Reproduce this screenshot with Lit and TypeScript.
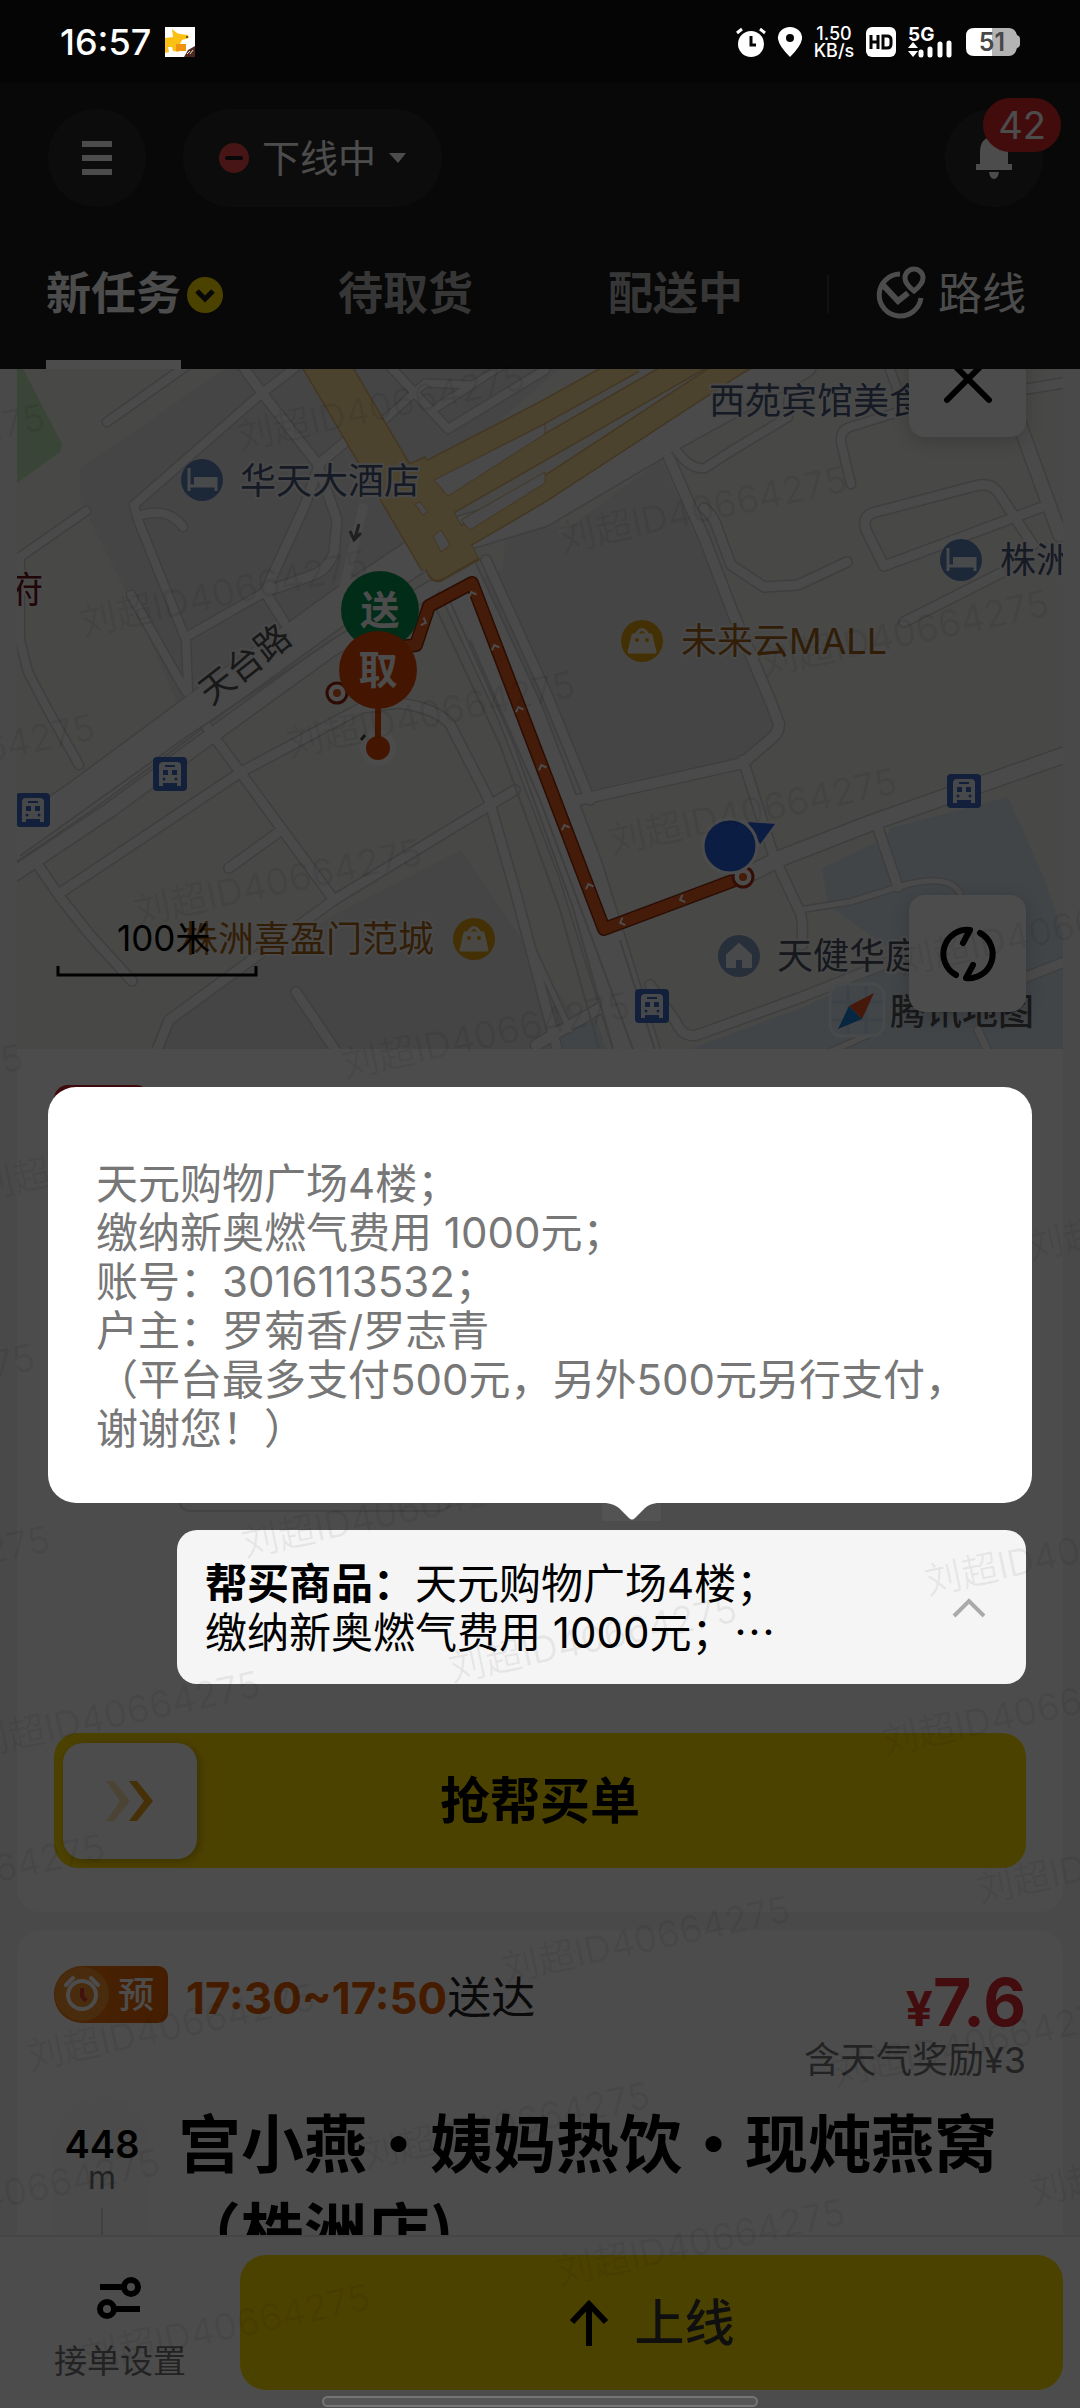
import { LitElement, html, svg, css } from "lit";
import { customElement } from "lit/decorators.js";

const FONT = css`Inter, "Noto Sans CJK SC", sans-serif`;

/* ---------- map data, in canvas units ---------- */

interface Road { d: string; w: number; }

const roads: Road[] = [
  { d: "M107 422L189 364", w: 8 },
  { d: "M300 364L262 393L134 505L138 520L186 640L188 690", w: 8 },
  { d: "M241 364L262 393L317 463L337 520L334 553Q328 568 316 574L265 592", w: 9 },
  { d: "M350 438L320 463L305 505L265 592L284 622", w: 9 },
  { d: "M265 592L186 637", w: 8 },
  { d: "M138 516Q168 506 183 527", w: 8 },
  { d: "M131 595L186 692", w: 8 },
  { d: "M86 511L20 557L20 640L28 672L48 710L79 765", w: 8 },
  { d: "M380 424L425 383L472 385L440 405", w: 7 },
  { d: "M388 364L448 429L545 370", w: 8 },
  { d: "M432 411L502 366", w: 6 },
  { d: "M669 458L705 540L733 613L770 700L779 724Q779 732 772 738L743 763L578 800", w: 10 },
  { d: "M676 450Q690 470 705 468L733 450L788 417L790 364", w: 8 },
  { d: "M851 484L841 442Q840 430 850 427L905 410", w: 8 },
  { d: "M704 508Q714 516 718 530L731 565L764 587L798 585L847 562", w: 9 },
  { d: "M1045 506L884 566L866 530Q862 518 872 513L975 486Q990 482 998 492L1033 545", w: 9 },
  { d: "M1018 420L1060 535", w: 13 },
  { d: "M888 364L900 396", w: 8 },
  { d: "M1020 390L1070 382", w: 9 },
  { d: "M904 622L1001 573", w: 9 },
  { d: "M60 893L241 772L361 708L398 703Q436 708 450 724L489 800L515 890L560 1060", w: 9 },
  { d: "M207 727L334 900", w: 9 },
  { d: "M279 832L229 868", w: 9 },
  { d: "M515 790L334 900L169 1020L153 1060", w: 9 },
  { d: "M38 865L60 897L90 935L132 981", w: 9 },
  { d: "M296 992L342 1060", w: 9 },
  { d: "M743 760L774 857L798 908Q804 916 802 945", w: 9 },
  { d: "M743 877L781 858L871 823L1070 753", w: 15 },
  { d: "M877 825L898 887", w: 9 },
  { d: "M805 909L850 902L898 887Q948 872 960 893", w: 5 },
  { d: "M650 985L676 1022Q684 1040 700 1034L802 997L920 950", w: 9 },
  { d: "M1010 983L1070 960", w: 9 },
  { d: "M820 1056L880 1030", w: 5 },
  { d: "M536 1045L600 1008", w: 10 },
  { d: "M978 1030L990 1056", w: 7 },
  { d: "M530 944L570 1030", w: 5 },
  { d: "M5 848L80 797L230 686L341 606L440 540L540 510L664 437L800 362", w: 34 },
  { d: "M5 880L110 810L200 744L330 650L432 588", w: 14 },
  { d: "M452 566L520 712L580 868L640 1060", w: 44 },
  { d: "M486 560L545 690L590 800", w: 9 },
];

const medians = [
  "M20 856L185 738L332 640",
  "M432 600L500 745L560 910L600 1052",
  "M445 590L512 740L572 905L614 1052",
  "M470 640L540 800L600 960L634 1052",
  "M620 940L655 1050",
];

const yellowRoads: Road[] = [
  { d: "M322 358L441 560", w: 42 },
  { d: "M424 474L540 414L634 362", w: 20 },
  { d: "M430 513L540 450L700 358", w: 22 },
  { d: "M448 546L540 492L745 358", w: 21 },
];

const routeLine = "M400 647L416 645L429 606L472 583L604 929L743 877";

const hotels: [number, number][] = [[202, 480], [961, 560]];
const malls: [number, number][] = [[642, 641], [474, 939]];
const buses: [number, number][] = [[170, 774], [33, 810], [964, 791], [652, 1006]];
const routeTicks: [number, number, number][] = [
  [424, 622, 110], [472, 594, -20], [495, 647, -20], [519, 709, -20], [542, 767, -20],
  [565, 827, -20], [589, 886, -20], [622, 922, -110], [682, 899, -110],
];

const labels: { x: number; y: number; t: string; c: string }[] = [
  { x: 240, y: 494, t: "华天大酒店", c: "hotel-label" },
  { x: 709, y: 414, t: "西苑宾馆美食", c: "hotel-label" },
  { x: 1000, y: 573, t: "株洲", c: "hotel-label" },
  { x: 681, y: 654, t: "未来云MALL", c: "mall-label" },
  { x: 182, y: 952, t: "株洲喜盈门范城", c: "mall-label" },
  { x: 777, y: 969, t: "天健华庭", c: "home-label" },
  { x: 7, y: 603, t: "府", c: "gov-label" },
];

const MARK = "刘超ID40664275";
const marks: [number, number][] = [
  [-240, 490], [240, 450], [562, 552], [83, 636], [764, 676], [290, 757], [612, 854],
  [-190, 800], [137, 925], [900, 975], [345, 1078], [-20, 1200], [-262, 1130], [1030, 1260],
  [-250, 1430], [245, 1557], [928, 1595], [-235, 1612], [452, 1682], [-25, 1757], [885, 1755],
  [-180, 1920], [980, 1903], [505, 1982], [30, 2070], [835, 2086], [365, 2168], [-125, 2235],
  [1033, 2205], [560, 2285], [85, 2370],
];

/* ---------- map ---------- */

@customElement("route-map")
export class RouteMap extends LitElement {
  static styles = css`
    :host { display: block; position: relative; overflow: hidden; font-family: ${FONT}; }
    .canvas { display: block; width: 100%; height: auto; }
    .casing { fill: none; stroke: #cfd0d2; stroke-linecap: round; stroke-linejoin: round; }
    .road { fill: none; stroke: #f7f7f7; stroke-linecap: round; stroke-linejoin: round; }
    .median { fill: none; stroke: #d2d3d5; stroke-width: 2; }
    .y-casing { fill: none; stroke: #e0b777; stroke-linecap: butt; stroke-linejoin: round; }
    .y-road { fill: none; stroke: #fbdf9c; stroke-linecap: butt; stroke-linejoin: round; }
    .label { font-size: 36px; paint-order: stroke; stroke: #f5f5f5; stroke-width: 4px; stroke-linejoin: round; }
    .hotel-label { fill: #4a5878; }
    .home-label { fill: #4c5262; }
    .mall-label { fill: #a8661a; }
    .gov-label { fill: #6d1418; }
    .street { font-size: 35px; fill: #505050; paint-order: stroke; stroke: #f5f5f5; stroke-width: 4px; }
    .brand { font-size: 36px; font-weight: 500; fill: #555; }
    .scale { font-size: 35px; fill: #000; }
    .pin { font-size: 39px; font-weight: 700; fill: #fff; text-anchor: middle; }
    .tool {
      position: absolute; right: 37px; width: 117px; height: 117px; padding: 0; border: 0;
      border-radius: 16px; background: #fff; box-shadow: 0 4px 18px rgba(0, 0, 0, .18);
      display: flex; align-items: center; justify-content: center;
    }
    .close { top: -49px; }
    .refresh { bottom: 37px; }
  `;

  render() {
    return html`
      <svg class="canvas" viewBox="17 369 1046 680" role="img" aria-label="地图">
        <rect x="17" y="369" width="1046" height="680" fill="#f1f0ea"></rect>
        <path fill="#e8e8e9" d="M80 468L225 369H320L440 560L190 735L150 640L80 500Z"></path>
        <path fill="#e8e8e9" d="M350 369H560L430 480L380 440Z"></path>
        <path fill="#e6e6e7" d="M480 580L545 545L661 460L774 710L775 728L740 757L590 790L520 680Z"></path>
        <path fill="#e6e6e8" d="M461 850L540 967L600 1049H155L172 1020L334 915Z"></path>
        <path fill="#e8e8e9" d="M505 540L560 520L530 690L500 620Z"></path>
        <path fill="#bfe6b4" d="M17 369H23L62 444L60 452L17 483Z"></path>
        <path fill="#dce6f0" d="M822 868L885 838L891 828L1008 797L1045 880L1063 935V1049H690L806 1006L905 960L828 905Z"></path>
        <path fill="#dce6f0" d="M540 1049L595 1015L606 1049Z"></path>
        ${roads.map(r => svg`<path class="casing" d=${r.d} stroke-width=${r.w + 3}></path>`)}
        ${roads.map(r => svg`<path class="road" d=${r.d} stroke-width=${r.w}></path>`)}
        <path d="M364 504L343 590" fill="none" stroke="#f7f7f7" stroke-width="9"></path>
        ${medians.map(d => svg`<path class="median" d=${d}></path>`)}
        ${yellowRoads.map(r => svg`<path class="y-casing" d=${r.d} stroke-width=${r.w + 3}></path>`)}
        <path fill="#e0b777" d="M395 470L425 456L480 560L441 582Q432 584 427 574Z"></path>
        ${yellowRoads.map(r => svg`<path class="y-road" d=${r.d} stroke-width=${r.w}></path>`)}
        <path fill="#fbdf9c" d="M395 470L425 458L478 558L441 579Q433 582 428 572Z"></path>
        <path fill="#f5f5f5" stroke="#e0b777" stroke-width="1" d="M433 536L441 530L450 545L441 552ZM415 504L420 502L428 512L423 515ZM461 520L545 472V483L470 530ZM434 480L545 424V434L448 496Z"></path>
        <path d="M359 524L355 538M350 531L354 540L361 533" fill="none" stroke="#6a6a6a" stroke-width="3"></path>

        ${hotels.map(([x, y]) => svg`<g transform="translate(${x} ${y})">
          <circle r="21" fill="#5f85ba"></circle>
          <path d="M-13 -12V11M-13 6H14M14 11V-3" stroke="#f2f5fa" stroke-width="3" fill="none"></path>
          <rect x="-8" y="-3" width="22" height="8" fill="#f2f5fa"></rect></g>`)}
        ${malls.map(([x, y]) => svg`<g transform="translate(${x} ${y})">
          <circle r="21" fill="#e5a012"></circle>
          <path d="M-9 -6H9L13 11H-13Z" fill="#f6efe0" stroke="#f6efe0" stroke-width="3" stroke-linejoin="round"></path>
          <path d="M-6 -6Q0 -17 6 -6" fill="none" stroke="#f6efe0" stroke-width="3"></path>
          <circle cx="-5" cy="-1" r="2" fill="#e5a012"></circle><circle cx="5" cy="-1" r="2" fill="#e5a012"></circle></g>`)}
        <g transform="translate(739 956)">
          <circle r="21" fill="#7f9fc2"></circle>
          <path d="M0 -12L12 -1V11H4V3H-4V11H-12V-1Z" fill="#f2f5fa" stroke="#f2f5fa" stroke-width="2" stroke-linejoin="round"></path>
        </g>
        ${buses.map(([x, y]) => svg`<g transform="translate(${x} ${y})">
          <rect x="-17" y="-17" width="34" height="34" rx="4" fill="#3f6cc8"></rect>
          <path d="M-11 -8Q-11 -12 -7 -12H7Q11 -12 11 -8V12H7V9H-7V12H-11Z" fill="#eef1f8"></path>
          <path d="M-5 -8H5" stroke="#3f6cc8" stroke-width="2"></path>
          <path d="M-7 -4H-2V1H-7ZM2 -4H7V1H2Z" fill="#3f6cc8"></path>
          <circle cx="-6" cy="5" r="1.5" fill="#3f6cc8"></circle><circle cx="6" cy="5" r="1.5" fill="#3f6cc8"></circle></g>`)}

        ${labels.map(l => svg`<text class="label ${l.c}" x=${l.x} y=${l.y}>${l.t}</text>`)}
        <text class="street" transform="translate(211 706) rotate(-38)">天台路</text>

        <path d=${routeLine} fill="none" stroke="#8c2c0c" stroke-width="14" stroke-linejoin="round"></path>
        <path d=${routeLine} fill="none" stroke="#e85a1e" stroke-width="11" stroke-linejoin="round"></path>
        ${routeTicks.map(([x, y, a]) => svg`<path transform="translate(${x} ${y}) rotate(${a})" d="M-4 2L0 -2L4 2" fill="none" stroke="#fff" stroke-width="2"></path>`)}
        <circle cx="337" cy="693" r="10" fill="#fff" stroke="#9c2410" stroke-width="3"></circle>
        <circle cx="337" cy="693" r="4" fill="#e85a1e"></circle>
        <circle cx="743" cy="877" r="10" fill="#fff" stroke="#b02c14" stroke-width="3"></circle>
        <circle cx="743" cy="877" r="4" fill="#e85a1e"></circle>
        <circle cx="380" cy="610" r="39" fill="#06934f"></circle>
        <text class="pin" x="380" y="624">送</text>
        <circle cx="378" cy="748" r="18" fill="#fbfbfb"></circle>
        <path d="M361 740L365 735" stroke="#444" stroke-width="3"></path>
        <path d="M378 700V748" stroke="#e54c04" stroke-width="6"></path>
        <circle cx="378" cy="748" r="12" fill="#e54c04"></circle>
        <circle cx="378" cy="670" r="39" fill="#e54c04"></circle>
        <text class="pin" x="378" y="684">取</text>
        <path d="M746 821L777 823L760 846Z" fill="#2b62e0" stroke="#f5f5f5" stroke-width="2"></path>
        <circle cx="730" cy="846" r="27" fill="#2b62e0" stroke="#fff" stroke-width="3"></circle>

        <text class="scale" x="117" y="951">100米</text>
        <path d="M58 966V975H256V966" fill="none" stroke="#000" stroke-width="3"></path>

        <rect x="830" y="984" width="54" height="52" rx="12" fill="#dfeaf5" stroke="#eef4fa" stroke-width="3"></rect>
        <path d="M848 986V1034M866 986V1034M832 1002H882M832 1020H882" stroke="#c9dcf0" stroke-width="3"></path>
        <path d="M874 993L862 1019L849 1006Z" fill="#e8501e"></path>
        <path d="M838 1029L849 1006L862 1019Z" fill="#1d7fd8"></path>
        <text class="brand" x="890" y="1025">腾讯地图</text>
      </svg>
      <button class="tool close" aria-label="关闭地图">
        <svg width="52" height="52" viewBox="-26 -26 52 52"><path d="M-21 -21L21 21M21 -21L-21 21" stroke="#000" stroke-width="6" stroke-linecap="round"></path></svg>
      </button>
      <button class="tool refresh" aria-label="刷新">
        <svg width="60" height="60" viewBox="-30 -30 60 60" fill="none" stroke="#000" stroke-width="6" stroke-linecap="round" stroke-linejoin="round">
          <path d="M-12 21A24 24 0 0 1 2 -24L-5 -11"></path>
          <path d="M12 -21A24 24 0 0 1 -2 24L5 11"></path>
        </svg>
      </button>
    `;
  }
}

/* ---------- application ---------- */

@customElement("app-root")
export class AppRoot extends LitElement {
  static styles = css`
    :host { display: block; font-family: ${FONT}; text-spacing-trim: space-all; }
    * { box-sizing: border-box; }
    button { font: inherit; color: inherit; border: 0; padding: 0; margin: 0; background: none; }
    svg { display: block; flex: none; overflow: visible; }
    .app { position: relative; display: flex; flex-direction: column; height: 100vh; overflow: hidden; background: #f5f5f5; }
    .scrim { position: absolute; inset: 0; z-index: 1; background: rgba(0, 0, 0, .7); }
    .marks { position: absolute; inset: 0; z-index: 3; width: 100%; height: 100%; pointer-events: none; }
    .marks text { font-size: 37px; fill: rgba(0, 0, 0, .06); }

    .status { flex: none; height: 83px; background: #111; }
    .status-row { position: relative; z-index: 2; display: flex; align-items: center; height: 84px; padding: 0 60px; color: #fff; }
    .clock { font-size: 36px; line-height: 40px; font-weight: 500; }
    .app-icon { margin-left: 14px; }
    .sys { display: flex; align-items: center; margin-left: auto; gap: 12px; }
    .speed { display: flex; flex-direction: column; align-items: center; width: 40px; font-size: 18px; line-height: 17px; font-weight: 500; }

    .header { flex: none; background: #1b1b1b; color: #fff; }
    .bar { display: flex; align-items: center; gap: 37px; padding: 26px 37px 0 48px; }
    .round { display: flex; align-items: center; justify-content: center; width: 98px; height: 98px; border-radius: 50%; background: #2b2b2b; }
    .state { display: flex; align-items: center; gap: 13px; height: 98px; padding: 0 36px; border-radius: 49px; background: #2b2b2b; font-size: 38px; line-height: 48px; }
    .bell { position: relative; margin-left: auto; }
    .badge { position: absolute; top: -11px; right: -18px; width: 78px; height: 54px; border-radius: 27px; background: #e02b2b; font-size: 38px; line-height: 54px; text-align: center; }
    .tabs { display: grid; grid-template-columns: 292fr 270fr 219fr auto; padding: 55px 54px 0 46px; }
    .tab { display: flex; align-items: flex-start; gap: 6px; height: 107px; font-size: 45px; line-height: 64px; font-weight: 700; color: #b5b5b5; }
    .tab-name { display: flex; flex-direction: column; justify-content: space-between; height: 107px; }
    .tab-name.active { color: #fff; border-bottom: 9px solid #fff; }
    .tab-arrow { margin-top: 15px; }
    .route { display: flex; align-items: center; gap: 12px; height: 64px; font-size: 44px; line-height: 64px; }
    .divider { width: 2px; height: 38px; margin-right: 35px; background: #3a3a3a; }

    .list { flex: 1; min-height: 0; overflow: hidden; display: flex; flex-direction: column; gap: 18px; padding: 0 17px; }
    .card { flex: none; background: #fff; border-radius: 24px; }
    .card.first { border-radius: 0 0 24px 24px; padding-bottom: 44px; }
    .summary { display: flex; flex-direction: column; justify-content: space-between; height: 463px; padding: 36px 0 0 37px; }
    .tag { width: 96px; height: 56px; border-radius: 14px; background: #d3242b; }
    .chip { width: 274px; height: 60px; margin-left: 124px; border: 2px solid #e2e2e2; border-radius: 12px; }
    .goods-wrap { position: relative; margin: 18px 37px 49px 160px; }
    .goods { position: relative; z-index: 2; display: flex; width: 100%; align-items: center; justify-content: space-between; padding: 29px 40px 27px 28px; border-radius: 20px; background: #f5f5f5; color: #000; text-align: left; font-size: 42px; line-height: 49px; }
    .goods-text { white-space: pre-line; }
    .popup-box { position: absolute; z-index: 4; left: -129px; right: -6px; bottom: calc(100% + 27px); }
    .popup { margin: 0; padding: 72px 48px 50px 48px; border-radius: 28px; background: #fff; color: #777; font-size: 42px; line-height: 49px; white-space: pre-line; }
    .tail-bg { position: absolute; top: 100%; left: 554px; width: 59px; height: 18px; background: #535353; }

    .grab { display: flex; align-items: center; position: relative; width: calc(100% - 74px); height: 135px; margin: 0 37px; border-radius: 24px; background: #ffdc00; color: #000; font-size: 50px; line-height: 60px; font-weight: 700; }
    .grab-text { flex: 1; margin-right: 143px; text-align: center; }
    .handle { display: flex; align-items: center; justify-content: center; width: 134px; height: 116px; margin-left: 9px; border-radius: 20px; background: #fff; box-shadow: 3px 2px 8px rgba(120, 90, 0, .4); }

    .order-head { display: flex; align-items: flex-start; padding: 36px 37px 0; }
    .book { display: flex; align-items: center; justify-content: space-between; width: 114px; height: 57px; padding-right: 14px; border-radius: 28px 10px 10px 28px; background: linear-gradient(90deg, #f27a10, #e66000); color: #fff; font-size: 36px; line-height: 56px; font-weight: 500; }
    .when { display: flex; align-items: baseline; margin-left: 18px; line-height: 64px; font-size: 44px; color: #222; }
    .time { font-size: 44px; font-weight: 700; color: #e66000; }
    .pay { margin-left: auto; text-align: right; color: #e02b33; }
    .price { display: flex; align-items: baseline; justify-content: flex-end; font-size: 66px; font-weight: 700; line-height: 72px; }
    .yen { font-size: 48px; line-height: 48px; }
    .bonus { font-size: 36px; line-height: 44px; color: #777; }
    .order-body { display: flex; gap: 28px; padding: 14px 37px 0; }
    .dist { display: flex; flex-direction: column; align-items: center; width: 96px; height: 400px; padding-top: 26px; border-radius: 48px; background: #fafafa; font-size: 38px; line-height: 44px; font-weight: 600; color: #000; }
    .unit { font-size: 32px; line-height: 24px; font-weight: 400; color: #777; }
    .stem { width: 2px; flex: 1; margin-top: 18px; background: #d8d8d8; }
    .shop { margin: 0; font-family: "Noto Sans CJK SC", sans-serif; font-size: 63px; line-height: 88px; font-weight: 700; color: #000; white-space: pre-line; }

    .bottom { flex: none; display: flex; gap: 54px; height: 173px; padding: 18px 17px 18px 54px; border-top: 2px solid #e6e6e6; background: #fff; position: relative; }
    .settings { display: flex; flex-direction: column; align-items: center; gap: 18px; padding-top: 22px; font-size: 33px; line-height: 48px; color: #777; white-space: nowrap; }
    .online { flex: 1; display: flex; align-items: center; justify-content: center; gap: 26px; height: 135px; border-radius: 26px; background: #ffdc00; color: #333; font-size: 50px; line-height: 60px; font-weight: 500; }
    .home-bar { position: absolute; bottom: 1px; left: 50%; width: 436px; height: 11px; margin-left: -218px; z-index: 2; border: 2px solid #757575; border-radius: 6px; background: #555; }
  `;

  render() {
    return html`
      <div class="app" lang="zh-CN">
        ${this.statusBar()} ${this.header()}
        <main class="list">
          <section class="card first">
            <route-map></route-map>
            <div class="summary">
              <div class="tag"></div>
              <div class="chip"></div>
            </div>
            <div class="goods-wrap">
              <button class="goods" aria-expanded="true">
                <span class="goods-text"><b>帮买商品：</b>天元购物广场4楼；\n缴纳新奥燃气费用 1000元；⋯</span>
                <svg width="34" height="20" viewBox="0 0 34 20"><path d="M2 18L17 3L32 18" fill="none" stroke="#aaa" stroke-width="4"></path></svg>
              </button>
              <div class="popup-box" role="tooltip">
                <p class="popup">天元购物广场4楼；\n缴纳新奥燃气费用 1000元；\n账号：3016113532；\n户主：罗菊香/罗志青\n（平台最多支付500元，另外500元另行支付，\n谢谢您！）</p>
                <div class="tail-bg">
                  <svg width="59" height="18" viewBox="0 0 59 18"><path d="M4 0H55Q47 1 43 5L33 15Q30 18 27 15L17 5Q12 1 4 0Z" fill="#fff"></path></svg>
                </div>
              </div>
            </div>
            <button class="grab">
              <span class="handle">
                <svg width="48" height="40" viewBox="0 0 48 40"><path d="M0 0H8L24 20L8 40H0L14 20Z" fill="#fae3b0"></path><path d="M23 0H31L47 20L31 40H23L38 20Z" fill="#e9a21c"></path></svg>
              </span>
              <span class="grab-text">抢帮买单</span>
            </button>
          </section>
          ${this.nextOrder()}
        </main>
        ${this.bottomBar()}
        <div class="scrim"></div>
        <svg class="marks" viewBox="0 0 1080 2408" preserveAspectRatio="xMinYMin slice" aria-hidden="true">
          ${marks.map(([x, y]) => svg`<text transform="translate(${x} ${y}) rotate(-12)">${MARK}</text>`)}
        </svg>
      </div>
    `;
  }

  private statusBar() {
    return html`
      <div class="status">
        <div class="status-row">
          <span class="clock">16:57</span>
          <svg class="app-icon" width="30" height="30" viewBox="0 0 30 30">
            <rect width="30" height="30" fill="#fff"></rect>
            <path d="M0 11L8 10L7 2L12 6L15 7L23 8L24 11L17 13L14 19L12 21L14 25L8 24L7 20L3 20L4 25L0 26Z" fill="#fbc014"></path>
            <rect x="11" y="17" width="10" height="7" fill="#f0930f"></rect>
            <circle cx="22" cy="10" r="1" fill="#333"></circle>
            <path d="M19 30L23 23L30 19V30Z" fill="#4a2a20"></path>
            <path d="M22 27L25 24M25 27L28 23" stroke="#e8d8d0" stroke-width="1"></path>
          </svg>
          <span class="sys">
            <svg width="30" height="30" viewBox="0 0 30 30"><circle cx="15" cy="17" r="13" fill="#fff"></circle><path d="M1 6L6 2M29 6L24 2" stroke="#fff" stroke-width="3"></path><path d="M15 9V18H20" fill="none" stroke="#050505" stroke-width="3"></path></svg>
            <svg width="24" height="30" viewBox="0 0 24 30"><path d="M12 0A12 11 0 0 1 24 12Q23 19 12 30Q1 19 0 12A12 11 0 0 1 12 0Z" fill="#fff"></path><circle cx="12" cy="11" r="4" fill="#050505"></circle></svg>
            <span class="speed"><span>1.50</span><span>KB/s</span></span>
            <svg width="30" height="30" viewBox="0 0 30 30"><rect width="30" height="30" rx="6" fill="#fff"></rect><path d="M5 8V22M12 8V22M5 15H12M17 9H21Q25 9 25 13V17Q25 21 21 21H17Z" fill="none" stroke="#050505" stroke-width="3"></path></svg>
            <svg width="46" height="32" viewBox="0 0 46 32"><text x="0" y="15" font-size="19" font-weight="700" fill="#fff">5G</text><path d="M0 22L5 16L10 22ZM0 25H10L5 31Z" fill="#fff"></path><path d="M13 26V29M22 23V29M32 18V29M41 17V29" stroke="#fff" stroke-width="5" stroke-linecap="round"></path></svg>
            <svg width="54" height="28" viewBox="0 0 54 28"><path d="M8 0H26V28H8Q0 28 0 20V8Q0 0 8 0Z" fill="#fff"></path><path d="M26 0H43Q49 0 51 7Q54 8 54 11V16Q54 19 51 20Q49 28 43 28H26Z" fill="#b4b4b4"></path><text x="26" y="23" text-anchor="middle" font-size="25" font-weight="600" fill="#484848">51</text></svg>
          </span>
        </div>
      </div>`;
  }

  private header() {
    return html`
      <header class="header">
        <div class="bar">
          <button class="round" aria-label="菜单">
            <svg width="30" height="34" viewBox="0 0 30 34"><path d="M0 3H30M0 17H30M0 31H30" stroke="#fff" stroke-width="6"></path></svg>
          </button>
          <button class="state">
            <svg width="30" height="30" viewBox="0 0 30 30"><circle cx="15" cy="15" r="15" fill="#ee4646"></circle><path d="M8 15H22" stroke="#1b1b1b" stroke-width="4" stroke-linecap="round"></path></svg>
            <span>下线中</span>
            <svg width="17" height="10" viewBox="0 0 17 10"><path d="M0 0H17L9 10Z" fill="#fff"></path></svg>
          </button>
          <button class="round bell" aria-label="消息">
            <svg width="36" height="42" viewBox="0 0 36 42"><path d="M4 27V15Q4 0 18 0Q32 0 32 15V27H36V33H0V27ZM13 35H23Q22 42 18 42Q14 42 13 35Z" fill="#fff"></path></svg>
            <span class="badge">42</span>
          </button>
        </div>
        <nav class="tabs">
          <button class="tab"><span class="tab-name active">新任务</span>
            <svg class="tab-arrow" width="36" height="36" viewBox="0 0 36 36"><circle cx="18" cy="18" r="18" fill="#ffdc00"></circle><path d="M10 14L18 22L26 14" fill="none" stroke="#1b1b1b" stroke-width="5"></path></svg>
          </button>
          <button class="tab"><span class="tab-name">待取货</span></button>
          <button class="tab"><span class="tab-name">配送中</span></button>
          <button class="route">
            <span class="divider"></span>
            <svg width="50" height="54" viewBox="0 0 50 54" fill="none" stroke="#fff" stroke-width="5">
              <path d="M24 7A21 21 0 1 0 45 31"></path>
              <path d="M38 24Q29 17 29 11A9 9 0 0 1 47 11Q47 17 38 24Z"></path>
              <path d="M7 18L22 34L32 26" stroke-width="6"></path>
            </svg>
            <span>路线</span>
          </button>
        </nav>
      </header>`;
  }

  private nextOrder() {
    return html`
      <section class="card">
        <div class="order-head">
          <span class="book">
            <svg width="57" height="57" viewBox="0 0 57 57"><circle cx="28" cy="28" r="27" fill="#f3902f"></circle><circle cx="28" cy="29" r="14" fill="none" stroke="#fff" stroke-width="4"></circle><path d="M12 19L19 12M37 12L44 19" stroke="#fff" stroke-width="4" stroke-linecap="round"></path><path d="M28 22V30L32 35" fill="none" stroke="#e03a30" stroke-width="4"></path></svg>
            预</span>
          <span class="when"><span class="time">17:30~17:50</span>送达</span>
          <div class="pay">
            <div class="price"><span class="yen">¥</span>7.6</div>
            <div class="bonus">含天气奖励¥3</div>
          </div>
        </div>
        <div class="order-body">
          <div class="dist">448<span class="unit">m</span><span class="stem"></span></div>
          <h2 class="shop">宫小燕·姨妈热饮·现炖燕窝\n（株洲店)</h2>
        </div>
      </section>`;
  }

  private bottomBar() {
    return html`
      <footer class="bottom">
        <button class="settings">
          <svg width="44" height="42" viewBox="0 0 44 42" fill="none" stroke="#000" stroke-width="6"><circle cx="33" cy="10" r="7"></circle><path d="M2 10H26M18 32H42"></path><circle cx="9" cy="32" r="7"></circle></svg>
          接单设置
        </button>
        <button class="online">
          <svg width="40" height="46" viewBox="0 0 40 46"><path d="M20 46V4M3 22L20 4L37 22" fill="none" stroke="#000" stroke-width="6"></path></svg>
          <span>上线</span>
        </button>
        <span class="home-bar"></span>
      </footer>`;
  }
}
